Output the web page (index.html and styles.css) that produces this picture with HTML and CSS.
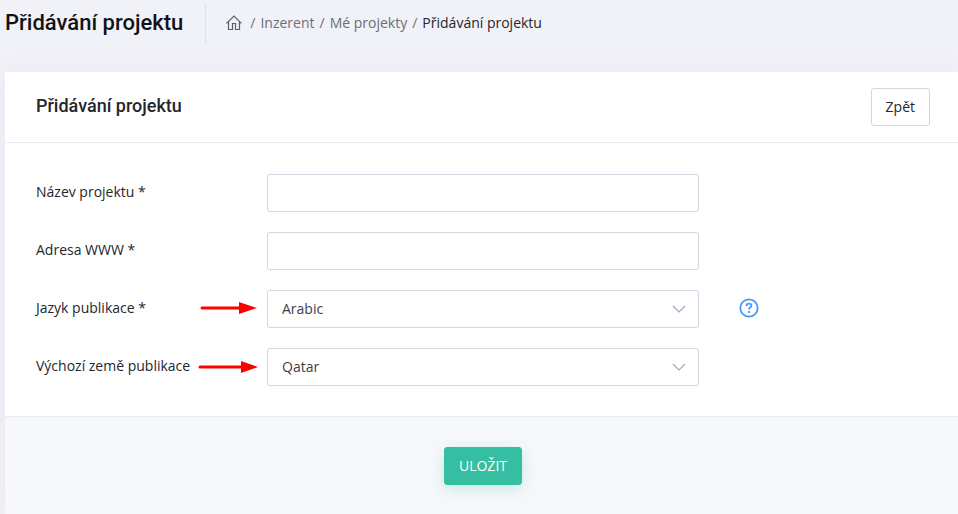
FILE: index.html
```
<!DOCTYPE html>
<html lang="cs">
<head>
    <meta charset="UTF-8">
    <meta name="viewport" content="width=device-width, initial-scale=1.0">
    <title>Přidávání projektu</title>
    <link rel="stylesheet" href="styles.css">
</head>
<body>
    <header class="page-header">
        <h1 class="page-title">Přidávání projektu</h1>
        <nav class="breadcrumb" aria-label="Breadcrumb">
            <a href="#" class="home-link" aria-label="Home">
                <svg width="16" height="16" viewBox="0 0 16 16" fill="none" stroke="currentColor" stroke-width="1.2">
                    <path d="M0.5 8.4L8 1L15.5 8.4M2.5 6.8V14.5H6.5V8.5H9.5V14.5H13.5V6.8"/>
                </svg>
            </a>
            <span>/</span>
            <a href="#">Inzerent</a>
            <span>/</span>
            <a href="#">Mé projekty</a>
            <span>/</span>
            <span class="current">Přidávání projektu</span>
        </nav>
    </header>

    <main class="card">
        <div class="card-header">
            <h2 class="card-title">Přidávání projektu</h2>
            <button type="button" class="btn btn-back">Zpět</button>
        </div>

        <form id="projectForm">
            <div class="card-body">
                <div class="form-row">
                    <div class="label-col">
                        <label for="projectName">Název projektu *</label>
                    </div>
                    <div class="field-col">
                        <input type="text" class="field" id="projectName" name="projectName">
                    </div>
                </div>

                <div class="form-row">
                    <div class="label-col">
                        <label for="projectUrl">Adresa WWW *</label>
                    </div>
                    <div class="field-col">
                        <input type="text" class="field" id="projectUrl" name="projectUrl">
                    </div>
                </div>

                <div class="form-row">
                    <div class="label-col">
                        <label for="language">Jazyk publikace *</label>
                        <svg class="arrow" width="58" height="14" viewBox="0 0 58 14" fill="#ff0000">
                            <path d="M2 5.5H39V1L57 7L39 13V8.5H2Q0.5 8.5 0.5 7Q0.5 5.5 2 5.5Z"/>
                        </svg>
                    </div>
                    <div class="field-col">
                        <select class="field" id="language" name="language">
                            <option>Arabic</option>
                        </select>
                        <svg class="chevron" width="14" height="8" viewBox="0 0 14 8" fill="none" stroke="#a6a5bd" stroke-width="1.2">
                            <path d="M1 1L7 7L13 1"/>
                        </svg>
                    </div>
                    <div class="help-col">
                        <svg width="20" height="20" viewBox="0 0 20 20" fill="none" stroke="#429aff" stroke-width="1.8">
                            <circle cx="10" cy="10" r="8.7"/>
                            <path d="M7.5 8V7.7C7.5 6.3 8.6 5.6 10 5.6S12.5 6.4 12.5 7.6C12.5 9.3 10 9.3 10 11.6M10 13V14.9"/>
                        </svg>
                    </div>
                </div>

                <div class="form-row">
                    <div class="label-col">
                        <label for="country">Výchozí země publikace</label>
                        <svg class="arrow" width="60" height="14" viewBox="0 0 60 14" fill="#ff0000">
                            <path d="M2 6.5H43V2L60 8L43 14V9.5H2Q0.5 9.5 0.5 8Q0.5 6.5 2 6.5Z"/>
                        </svg>
                    </div>
                    <div class="field-col">
                        <select class="field" id="country" name="country">
                            <option>Qatar</option>
                        </select>
                        <svg class="chevron" width="14" height="8" viewBox="0 0 14 8" fill="none" stroke="#a6a5bd" stroke-width="1.2">
                            <path d="M1 1L7 7L13 1"/>
                        </svg>
                    </div>
                </div>
            </div>

            <div class="card-footer">
                <button type="submit" class="btn btn-save">ULOŽIT</button>
            </div>
        </form>
    </main>
</body>
</html>
```
FILE: styles.css
```
* {
    box-sizing: border-box;
}
html {
    height: 100%;
}
body {
    display: flex;
    flex-direction: column;
    min-height: 100%;
    margin: 0;
    background-color: #f1f2f7;
    color: #24262d;
    font-family: "Open Sans", sans-serif;
    font-size: 14px;
    line-height: 20px;
}
a {
    color: inherit;
    text-decoration: none;
}
svg {
    display: block;
}
.page-header {
    display: flex;
    align-items: center;
    padding: 3px 5px 29px;
}
.page-title {
    margin: 0;
    padding-right: 22px;
    color: #111217;
    font-family: Roboto, sans-serif;
    font-size: 22px;
    font-weight: 500;
    line-height: 40px;
    border-right: 1px solid #e0e1e8;
}
.breadcrumb {
    display: flex;
    align-items: center;
    gap: 5px;
    padding-left: 20px;
    color: #6c6e78;
}
.home-link {
    margin-right: 3px;
    color: #5a5d6c;
}
.breadcrumb .current {
    color: #24262d;
}
.card {
    display: flex;
    flex-direction: column;
    flex: 1;
    margin-left: 5px;
    background-color: #fff;
    box-shadow: 0 0 30px rgba(82, 63, 105, 0.06);
}
.card-header {
    display: flex;
    align-items: flex-start;
    justify-content: space-between;
    padding: 16px 28px 16px 31px;
    border-bottom: 1px solid #ebecf3;
}
.card-title {
    margin: 0;
    font-family: Roboto, sans-serif;
    font-size: 18px;
    font-weight: 500;
    line-height: 36px;
}
#projectForm {
    display: flex;
    flex-direction: column;
    flex: 1;
}
.card-body {
    display: flex;
    flex-direction: column;
    gap: 20px;
    padding: 31px 13px 30px 16px;
}
.form-row {
    display: grid;
    grid-template-columns: 3fr 6fr 3fr;
}
.label-col,
.field-col {
    position: relative;
    padding: 0 15px;
}
.label-col {
    padding-top: 8px;
}
.help-col {
    padding: 8px 25px;
}
.field {
    display: block;
    width: 100%;
    height: 38px;
    padding: 0 14px;
    background-color: #fff;
    border: 1px solid #d3d5e3;
    border-radius: 3px;
    color: #3d4047;
    font: inherit;
}
select.field {
    appearance: none;
}
.chevron {
    position: absolute;
    top: 15px;
    right: 28px;
    pointer-events: none;
}
/* red pointers run over the edge of the label column */
.arrow {
    position: absolute;
    top: 11px;
    right: -6px;
}
.btn {
    height: 38px;
    padding: 0 14px;
    border: 1px solid #d3d5e3;
    border-radius: 3px;
    background-color: #fff;
    color: #24262d;
    font: inherit;
    cursor: pointer;
}
.card-footer {
    flex: 1;
    padding: 30px 13px 30px 16px;
    background-color: #f7f8fa;
    border-top: 1px solid #ebecf3;
    text-align: center;
}
.btn-save {
    background-color: #36bea3;
    border-color: #36bea3;
    color: #fff;
    box-shadow: 0 4px 16px rgba(54, 190, 163, 0.25);
}
```
